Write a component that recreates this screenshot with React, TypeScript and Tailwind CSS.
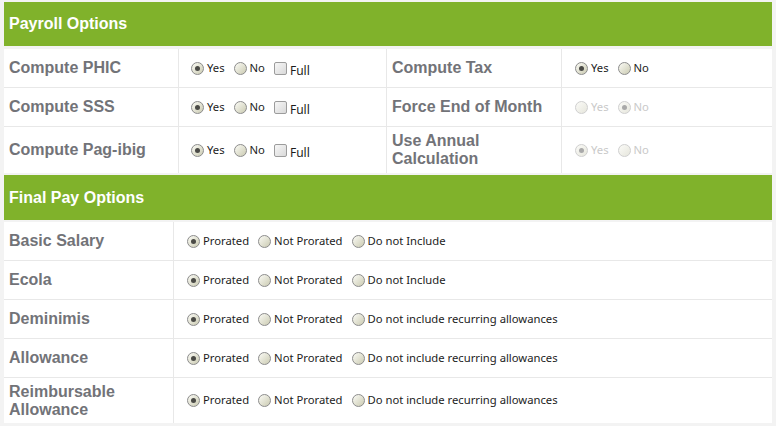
import type { ReactNode } from 'react';

type Opt = { label: string; checked?: boolean };

const Radio = ({ checked, disabled }: { checked?: boolean; disabled?: boolean }) => (
  <span
    className={`flex h-[13px] w-[13px] shrink-0 items-center justify-center rounded-full border bg-gradient-to-br ${
      disabled
        ? 'border-[#cfcfcf] from-[#fbfbf8] to-[#e6e6dc]'
        : 'border-[#8c8c8c] from-[#fbfbf6] to-[#cbcbb2]'
    }`}
  >
    {checked && (
      <span
        className={`h-[5px] w-[5px] rounded-full ${disabled ? 'bg-[#a9a9a9]' : 'bg-[#4a4a46]'}`}
      />
    )}
  </span>
);

const Checkbox = () => (
  <span className="h-[13px] w-[13px] shrink-0 rounded-[2px] border border-[#9c9c9c] bg-gradient-to-br from-[#f7f7f7] to-[#d9d9d9]" />
);

const Options = ({ opts, disabled, full }: { opts: Opt[]; disabled?: boolean; full?: boolean }) => (
  <div className="flex items-center gap-[9px]">
    {opts.map((o) => (
      <div key={o.label} className="flex items-center gap-[3px]">
        <Radio checked={o.checked} disabled={disabled} />
        <span className={disabled ? 'text-[#c9c9c9]' : 'text-[#1c1c1c]'}>{o.label}</span>
      </div>
    ))}
    {full && (
      <div className="flex items-center gap-[3px]">
        <Checkbox />
        <span className="translate-y-[3px] text-[12px] text-[#1c1c1c]">Full</span>
      </div>
    )}
  </div>
);

const Label = ({ children }: { children: ReactNode }) => (
  <div className="flex items-center border-r border-[#e8e8e8] px-[5px] text-[16px] font-bold leading-[18px] text-[#727378]">
    {children}
  </div>
);

const Header = ({ title, h }: { title: string; h: string }) => (
  <div className={`flex items-center bg-[#80b22b] px-[5px] text-[16px] font-bold text-white ${h}`}>
    {title}
  </div>
);

const yesNo = (yes: boolean): Opt[] => [
  { label: 'Yes', checked: yes },
  { label: 'No', checked: !yes },
];

const payroll = [
  {
    left: 'Compute PHIC',
    right: 'Compute Tax',
    rightOpts: yesNo(true),
    rightDisabled: false,
    h: 'h-[38px]',
  },
  {
    left: 'Compute SSS',
    right: 'Force End of Month',
    rightOpts: yesNo(false),
    rightDisabled: true,
    h: 'h-[39px] border-t',
  },
  {
    left: 'Compute Pag-ibig',
    right: (
      <>
        Use Annual
        <br />
        Calculation
      </>
    ),
    rightOpts: yesNo(true),
    rightDisabled: true,
    h: 'h-[47px] border-t',
  },
];

const finalPay = [
  { name: 'Basic Salary', last: 'Do not Include', h: 'h-[38px]' },
  { name: 'Ecola', last: 'Do not Include', h: 'h-[39px] border-t' },
  { name: 'Deminimis', last: 'Do not include recurring allowances', h: 'h-[39px] border-t' },
  { name: 'Allowance', last: 'Do not include recurring allowances', h: 'h-[39px] border-t' },
  {
    name: (
      <>
        Reimbursable
        <br />
        Allowance
      </>
    ),
    last: 'Do not include recurring allowances',
    h: 'h-[46px] border-t',
  },
];

export default function App() {
  return (
    <div
      className="h-[426px] w-[776px] overflow-hidden bg-[#f3f3f3] pl-[4px] pt-[2px]"
      style={{ fontFamily: '"Liberation Sans", Arial, sans-serif' }}
    >
      <div className="flex w-[768px] flex-col">
        {/* Payroll Options */}
        <Header title="Payroll Options" h="h-[44px]" />
        <div className="mt-[3px] bg-white">
          {payroll.map((r, i) => (
            <div
              key={i}
              className={`grid grid-cols-[175px_208px_175px_1fr] border-[#e8e8e8] ${r.h}`}
            >
              <Label>{r.left}</Label>
              <div className="flex items-center border-r border-[#e8e8e8] pl-[12px] font-['Noto_Sans',sans-serif] text-[11.25px]">
                <Options opts={yesNo(true)} full />
              </div>
              <Label>{r.right}</Label>
              <div className="flex items-center pl-[13px] font-['Noto_Sans',sans-serif] text-[11.25px]">
                <Options opts={r.rightOpts} disabled={r.rightDisabled} />
              </div>
            </div>
          ))}
        </div>

        {/* Final Pay Options */}
        <Header title="Final Pay Options" h="mt-[2px] h-[45px]" />
        <div className="mt-[2px] bg-white">
          {finalPay.map((r, i) => (
            <div key={i} className={`grid grid-cols-[170px_1fr] border-[#e8e8e8] ${r.h}`}>
              <Label>{r.name}</Label>
              <div className="flex items-center pl-[13px] font-['Noto_Sans',sans-serif] text-[11.25px]">
                <Options
                  opts={[
                    { label: 'Prorated', checked: true },
                    { label: 'Not Prorated' },
                    { label: r.last },
                  ]}
                />
              </div>
            </div>
          ))}
        </div>
      </div>
    </div>
  );
}
